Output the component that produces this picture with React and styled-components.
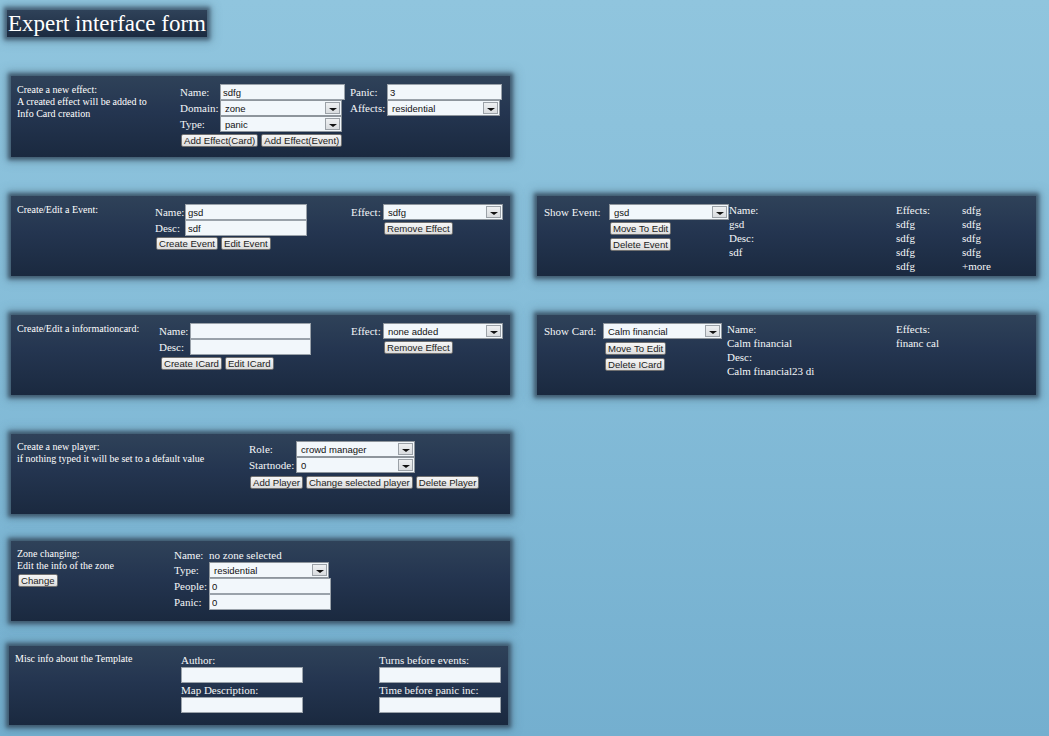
import React from 'react'
import styled, { createGlobalStyle } from 'styled-components'

const GlobalStyle = createGlobalStyle`
  html, body {
    margin: 0;
    padding: 0;
  }
  body {
    min-height: 100vh;
    background: linear-gradient(to bottom, #90c5de 0%, #84bcd8 50%, #74afcf 100%);
    font-family: "Liberation Serif", "Times New Roman", serif;
    color: #fff;
  }
`

const Page = styled.div`
  display: flex;
  flex-direction: column;
  padding-top: 10px;
`

const Title = styled.h1`
  align-self: flex-start;
  margin: 0 0 0 7px;
  height: 27px;
  padding: 0 1px;
  font-size: 23px;
  font-weight: normal;
  line-height: 28px;
  white-space: nowrap;
  background: linear-gradient(to bottom, #2f4259, #1b2a40);
  box-shadow: 0 0 4px 3px rgba(60, 84, 104, 0.85), 0 0 9px 5px rgba(70, 100, 120, 0.35);
`

const Row = styled.div`
  display: flex;
  gap: 27px;
  margin-top: ${p => p.$top}px;
  margin-left: ${p => p.$left || 11}px;
`

const Panel = styled.section`
  box-sizing: border-box;
  display: flex;
  align-items: flex-start;
  width: ${p => p.$w || 499}px;
  height: ${p => p.$h || 80}px;
  padding: ${p => p.$pt || 8}px 0 0 ${p => p.$pl || 6}px;
  background: linear-gradient(to bottom, #2f4259 0%, #243550 45%, #1a293f 100%);
  box-shadow: 0 0 4px 3px rgba(55, 78, 98, 0.85), 0 0 9px 5px rgba(70, 100, 120, 0.35);
`

const Note = styled.div`
  flex-shrink: 0;
  width: ${p => p.$w}px;
  font-size: 10px;
  line-height: 12px;
`

const Fields = styled.div`
  display: grid;
  flex-shrink: 0;
  grid-template-columns: ${p => p.$label}px ${p => p.$ctrl}px;
  grid-auto-rows: 16px;
  ${p => p.$rows && `grid-template-rows: ${p.$rows};`}
  align-items: center;
  margin-left: ${p => p.$ml || 0}px;
`

const Column = styled.div`
  display: flex;
  flex-direction: column;
  flex-shrink: 0;
  margin-left: ${p => p.$ml || 0}px;
`

const Label = styled.span`
  font-size: 11px;
  line-height: 14px;
  color: #f4f6f8;
  white-space: nowrap;
`

const TextInput = styled.input`
  box-sizing: border-box;
  width: ${p => p.$w}px;
  height: 16px;
  margin: 0;
  padding: 0 2px;
  border: 1px solid #9aa2aa;
  background: #f2f7fb;
  color: #111;
  font-family: "Liberation Sans", Arial, sans-serif;
  font-size: 9.5px;
  outline: none;
`

const Dropdown = styled.div`
  box-sizing: border-box;
  display: flex;
  align-items: center;
  width: ${p => p.$w}px;
  height: 16px;
  padding-left: 4px;
  border: 1px solid #8e959c;
  background: #f2f7fb;
  color: #111;
  font-family: "Liberation Sans", Arial, sans-serif;
  font-size: 9.5px;
  white-space: nowrap;
`

const Arrow = styled.span`
  box-sizing: border-box;
  display: flex;
  align-items: flex-end;
  justify-content: center;
  width: 15px;
  height: 12px;
  margin: 0 1px 0 auto;
  padding-bottom: 2px;
  border: 1px solid #9ba1a7;
  background: linear-gradient(to bottom, #eef0f2, #d9dcdf);
  &::after {
    content: "";
    border-left: 4px solid transparent;
    border-right: 4px solid transparent;
    border-top: 3px solid #111;
  }
`

const Button = styled.button`
  box-sizing: border-box;
  height: 13px;
  margin: 0;
  padding: 0 2px;
  border: 1px solid #707070;
  border-radius: 2px;
  background: linear-gradient(to bottom, #f6f6f6, #dcdcdc);
  color: #222;
  font-family: "Liberation Sans", Arial, sans-serif;
  font-size: 9.6px;
  line-height: 11px;
  white-space: nowrap;
`

const Buttons = styled.div`
  display: flex;
  gap: ${p => p.$gap || 3}px;
  flex-direction: ${p => (p.$stack ? 'column' : 'row')};
  align-items: flex-start;
  align-self: start;
  grid-column: ${p => p.$col || '1 / -1'};
  margin-top: ${p => p.$mt || 2}px;
  margin-left: ${p => p.$ml || 0}px;
`

const Info = styled.div`
  flex-shrink: 0;
  width: ${p => p.$w}px;
  margin-left: ${p => p.$ml || 0}px;
  margin-top: -1px;
  font-size: 11px;
  line-height: 14px;
  color: #f4f6f8;
  white-space: nowrap;
`

const InfoGrid = styled.div`
  display: grid;
  grid-template-columns: 66px auto;
  margin-top: -1px;
  font-size: 11px;
  line-height: 14px;
  color: #f4f6f8;
  white-space: nowrap;
`

const Select = ({ w, value }) => (
  <Dropdown $w={w}>
    {value}
    <Arrow />
  </Dropdown>
)

export default function App() {
  const effects = ['Effects:', 'sdfg', 'sdfg', 'sdfg', 'sdfg', 'sdfg', 'sdfg', 'sdfg', 'sdfg', '+more']

  return (
    <Page>
      <GlobalStyle />
      <Title>Expert interface form</Title>

      <Row $top={39}>
        <Panel $h={81}>
          <Note $w={163}>
            Create a new effect:<br />
            A created effect will be added to<br />
            Info Card creation
          </Note>
          <Fields $label={40} $ctrl={125}>
            <Label>Name:</Label>
            <TextInput $w={125} defaultValue="sdfg" />
            <Label>Domain:</Label>
            <Select w={122} value="zone" />
            <Label>Type:</Label>
            <Select w={122} value="panic" />
            <Buttons $ml={1}>
              <Button>Add Effect(Card)</Button>
              <Button>Add Effect(Event)</Button>
            </Buttons>
          </Fields>
          <Fields $label={37} $ctrl={115} $ml={5}>
            <Label>Panic:</Label>
            <TextInput $w={115} defaultValue="3" />
            <Label>Affects:</Label>
            <Select w={113} value="residential" />
          </Fields>
        </Panel>
      </Row>

      <Row $top={39}>
        <Panel>
          <Note $w={138}>Create/Edit a Event:</Note>
          <Fields $label={30} $ctrl={122}>
            <Label>Name:</Label>
            <TextInput $w={122} defaultValue="gsd" />
            <Label>Desc:</Label>
            <TextInput $w={122} defaultValue="sdf" />
            <Buttons $ml={1} $mt={1}>
              <Button>Create Event</Button>
              <Button>Edit Event</Button>
            </Buttons>
          </Fields>
          <Fields $label={32} $ctrl={120} $ml={44}>
            <Label>Effect:</Label>
            <Select w={120} value="sdfg" />
            <Buttons $col="2" $ml={1} $mt={2}>
              <Button>Remove Effect</Button>
            </Buttons>
          </Fields>
        </Panel>
        <Panel $pl={7}>
          <Fields $label={65} $ctrl={120}>
            <Label>Show Event:</Label>
            <Select w={120} value="gsd" />
            <Buttons $col="2" $ml={1} $mt={2} $stack>
              <Button>Move To Edit</Button>
              <Button>Delete Event</Button>
            </Buttons>
          </Fields>
          <Info $w={167}>
            Name:<br />gsd<br />Desc:<br />sdf
          </Info>
          <InfoGrid>
            {effects.map((e, i) => (
              <span key={i}>{e}</span>
            ))}
          </InfoGrid>
        </Panel>
      </Row>

      <Row $top={39}>
        <Panel>
          <Note $w={142}>Create/Edit a informationcard:</Note>
          <Fields $label={31} $ctrl={121}>
            <Label>Name:</Label>
            <TextInput $w={121} />
            <Label>Desc:</Label>
            <TextInput $w={121} />
            <Buttons $ml={2} $mt={2}>
              <Button>Create ICard</Button>
              <Button>Edit ICard</Button>
            </Buttons>
          </Fields>
          <Fields $label={32} $ctrl={120} $ml={40}>
            <Label>Effect:</Label>
            <Select w={120} value="none added" />
            <Buttons $col="2" $ml={1} $mt={2}>
              <Button>Remove Effect</Button>
            </Buttons>
          </Fields>
        </Panel>
        <Panel $pl={7}>
          <Fields $label={59} $ctrl={119}>
            <Label>Show Card:</Label>
            <Select w={119} value="Calm financial" />
            <Buttons $col="2" $ml={2} $mt={3} $stack>
              <Button>Move To Edit</Button>
              <Button>Delete ICard</Button>
            </Buttons>
          </Fields>
          <Info $w={169} $ml={5}>
            Name:<br />Calm financial<br />Desc:<br />Calm financial23 di
          </Info>
          <Info $w={100}>
            Effects:<br />financ cal
          </Info>
        </Panel>
      </Row>

      <Row $top={39}>
        <Panel $pt={7}>
          <Note $w={232}>
            Create a new player:<br />
            if nothing typed it will be set to a default value
          </Note>
          <Fields $label={47} $ctrl={119}>
            <Label>Role:</Label>
            <Select w={119} value="crowd manager" />
            <Label>Startnode:</Label>
            <Select w={119} value="0" />
            <Buttons $ml={1} $mt={3}>
              <Button>Add Player</Button>
              <Button>Change selected player</Button>
              <Button>Delete Player</Button>
            </Buttons>
          </Fields>
        </Panel>
      </Row>

      <Row $top={27}>
        <Panel $pt={7}>
          <Note $w={157}>
            Zone changing:<br />
            Edit the info of the zone
            <Buttons $ml={1} $mt={2}>
              <Button>Change</Button>
            </Buttons>
          </Note>
          <Fields $label={35} $ctrl={122} $rows="14px repeat(3, 16px)">
            <Label>Name:</Label>
            <Label>no zone selected</Label>
            <Label>Type:</Label>
            <Select w={120} value="residential" />
            <Label>People:</Label>
            <TextInput $w={122} defaultValue="0" />
            <Label>Panic:</Label>
            <TextInput $w={122} defaultValue="0" />
          </Fields>
        </Panel>
      </Row>

      <Row $top={25} $left={9}>
        <Panel $pt={7} $h={79}>
          <Note $w={166}>Misc info about the Template</Note>
          <Column>
            <Label>Author:</Label>
            <TextInput $w={122} />
            <Label>Map Description:</Label>
            <TextInput $w={122} />
          </Column>
          <Column $ml={76}>
            <Label>Turns before events:</Label>
            <TextInput $w={122} />
            <Label>Time before panic inc:</Label>
            <TextInput $w={122} />
          </Column>
        </Panel>
      </Row>
    </Page>
  )
}
